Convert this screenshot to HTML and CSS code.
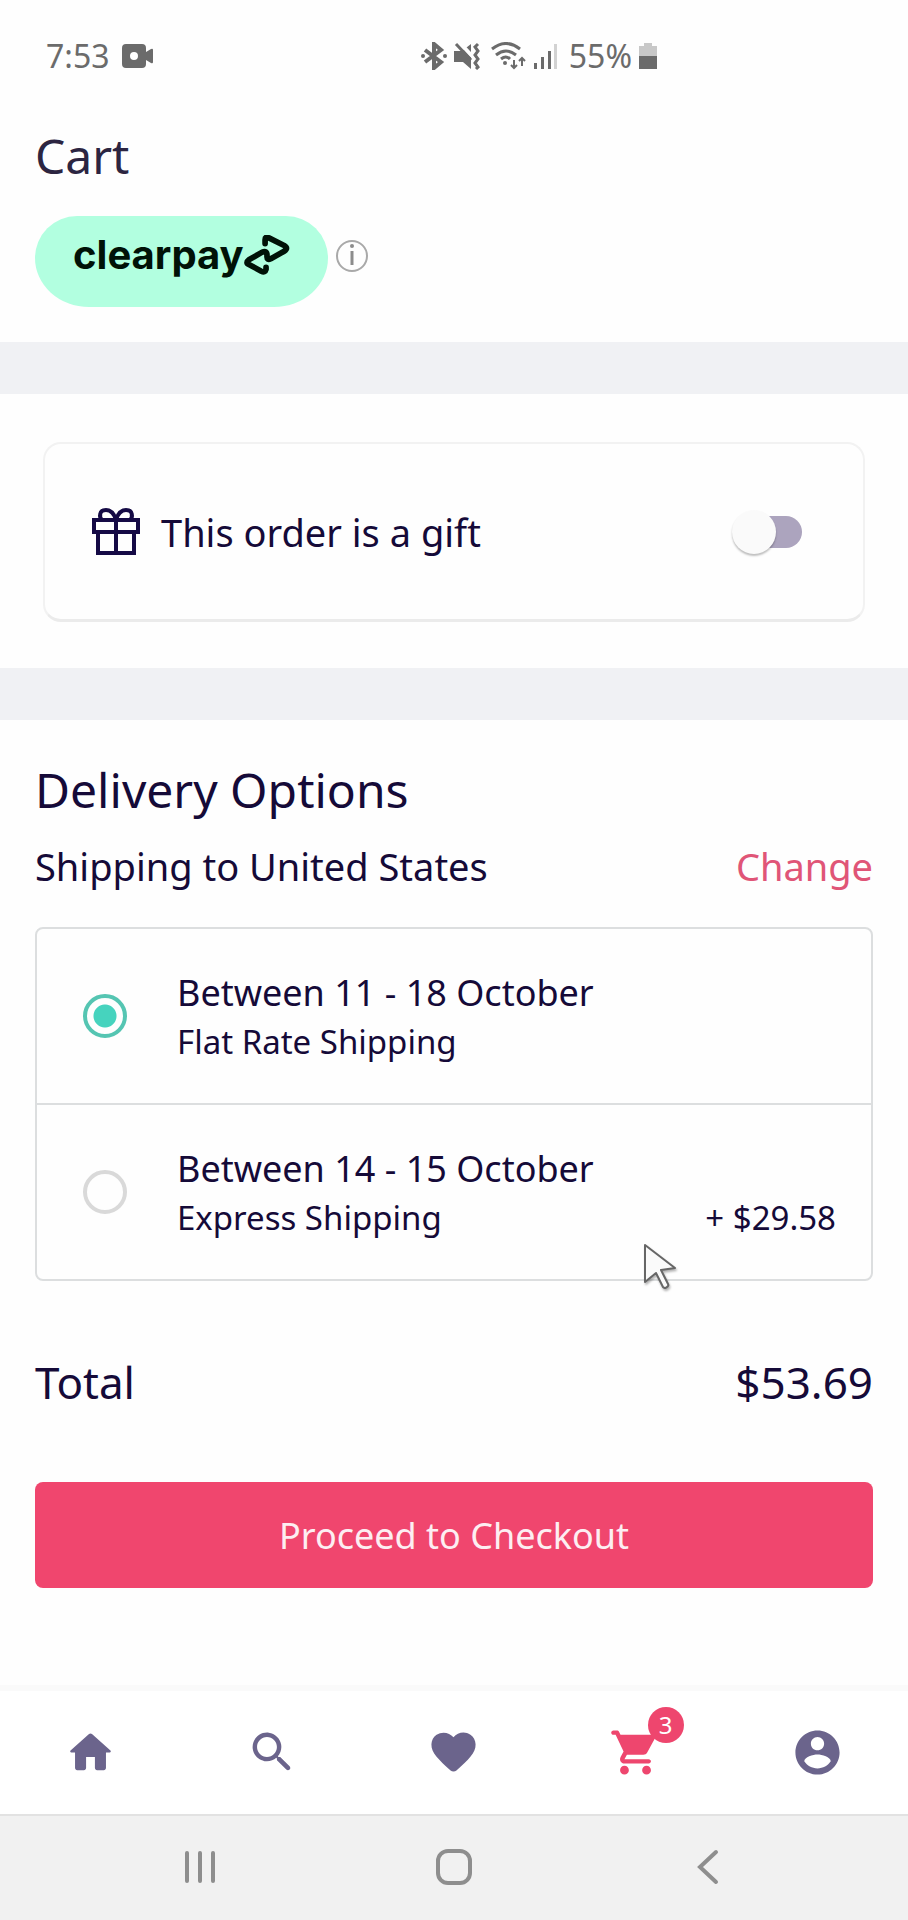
FILE: index.html
```html
<!DOCTYPE html>
<html lang="en">
<head>
    <meta charset="UTF-8">
    <meta name="viewport" content="width=device-width, initial-scale=1.0">
    <title>Cart</title>
    <link rel="stylesheet" href="styles.css">
</head>
<body>
    <div class="status-bar">
        <span class="status-time">7:53</span>
        <svg class="camera-icon" width="32" height="24" viewBox="0 0 32 24">
            <path fill-rule="evenodd" d="M4 0h16q4 0 4 4v4l5-3q2-1 2 1v12q0 2-2 1l-5-3v4q0 4-4 4H4q-4 0-4-4V4q0-4 4-4zm8 8a4 4 0 1 0 0 8 4 4 0 1 0 0-8z"/>
        </svg>
        <div class="status-right">
            <svg width="26" height="28" viewBox="0 0 26 28">
                <path d="M4 8l16 12-7 6V2l7 6L4 20" fill="none" stroke="#6b6b6b" stroke-width="4"/>
                <circle cx="2" cy="14" r="2"/><circle cx="24" cy="14" r="2"/>
            </svg>
            <svg width="27" height="28" viewBox="0 0 27 28">
                <path d="M0 9h8l9-7v25l-8-7H0z"/>
                <path d="M5 0l13 14" stroke="#fefefe" stroke-width="4"/>
                <path d="M2 2l15 16M24 2l-3 3 3 4-3 4 3 4-3 4 3 4-2 2" fill="none" stroke="#6b6b6b" stroke-width="3"/>
            </svg>
            <svg class="wifi-icon" width="36" height="28" viewBox="0 0 36 28">
                <path d="M1 7q14-11 28 0M5 13q10-8 20 0M10 17q5-4 9 0" fill="none" stroke="#6b6b6b" stroke-width="3"/>
                <circle cx="14" cy="21" r="2"/>
                <path d="M23 18v7M20 23l3 3 3-3M31 24v-7M28 19l3-3 3 3" fill="none" stroke="#6b6b6b" stroke-width="2"/>
            </svg>
            <svg class="signal-icon" width="24" height="28" viewBox="0 0 24 28">
                <path d="M0 21h3v6H0zM7 15h3v12H7zM14 9h3v18h-3z"/>
                <path d="M20 2h3v25h-3z" fill="#d2d2d2"/>
            </svg>
            <span class="status-battery">55%</span>
            <svg width="18" height="28" viewBox="0 0 18 28">
                <path d="M5 1h8v3h5v10H0V4h5z" fill="#c8c8c8"/>
                <path d="M0 14h18v13H0z"/>
            </svg>
        </div>
    </div>

    <header class="header">
        <h1 class="page-title">Cart</h1>
        <div class="clearpay">
            <div class="clearpay-badge">
                <span>clearpay</span>
                <svg width="46" height="40" viewBox="0 0 48 42">
                    <path d="M22 9V5q0-4 4-2l16 8q5 3 0 6l-14 8q-4 2-4-2v-2q0-5-5-3L5 26q-4 3 0 5l13 7q4 2 5-2v-2" fill="none" stroke="#001207" stroke-width="6" stroke-linejoin="round" stroke-linecap="round"/>
                </svg>
            </div>
            <button class="info-btn" aria-label="About Clearpay">
                <svg width="34" height="34" viewBox="0 0 34 34">
                    <circle cx="17" cy="17" r="15" fill="none" stroke="#a9a9a9" stroke-width="2"/>
                    <path d="M17 12v14" stroke="#8c8c8c" stroke-width="3"/>
                    <circle cx="17" cy="7" r="2" fill="#8c8c8c"/>
                </svg>
            </button>
        </div>
    </header>

    <section class="gift-section">
        <div class="gift-card">
            <svg width="50" height="50" viewBox="0 0 50 50" fill="none" stroke="#150a45" stroke-width="4">
                <path d="M3 13h44v12H3zM7 25v21h36V25M25 13v33M25 13c-2-7-6-10-10-10-7 0-7 7-4 10M25 13c2-7 6-10 10-10 7 0 7 7 4 10"/>
            </svg>
            <label for="gift">This order is a gift</label>
            <input type="checkbox" id="gift" class="toggle">
        </div>
    </section>

    <main class="delivery">
        <h2 class="section-title">Delivery Options</h2>
        <div class="ship-row">
            <span>Shipping to United States</span>
            <a href="#" class="change-link">Change</a>
        </div>

        <div class="options">
            <label class="option">
                <input type="radio" name="shipping" checked>
                <span class="option-text">
                    <span class="option-date">Between 11 - 18 October</span>
                    <span class="option-name">Flat Rate Shipping</span>
                </span>
            </label>
            <label class="option">
                <input type="radio" name="shipping">
                <span class="option-text">
                    <span class="option-date">Between 14 - 15 October</span>
                    <span class="option-name">Express Shipping</span>
                </span>
                <span class="option-price">+ $29.58</span>
            </label>
            <svg class="cursor" width="36" height="50" viewBox="0 0 36 50">
                <path d="M2 2v37l11-9 7 14q2 2 4 0 2-1 1-3l-7-14 14-2z" fill="#fafafa" stroke="#666" stroke-width="2" stroke-linejoin="round"/>
            </svg>
        </div>

        <div class="total-row">
            <span>Total</span>
            <span>$53.69</span>
        </div>

        <button class="checkout-btn">Proceed to Checkout</button>
    </main>

    <nav class="tab-bar">
        <a href="#" aria-label="Home">
            <svg class="tab-icon" viewBox="0 0 24 24"><path d="M10 19v-5h4v5c0 .55.45 1 1 1h3c.55 0 1-.45 1-1v-7h1.700c.46 0 .68-.57.33-.87L12.670 3.600c-.38-.34-.96-.34-1.340 0l-8.360 7.530c-.34.3-.13.87.33.87H5v7c0 .55.45 1 1 1h3c.55 0 1-.45 1-1z"/></svg>
        </a>
        <a href="#" aria-label="Search">
            <svg class="tab-icon" viewBox="0 0 24 24"><path d="M15.500 14h-.79l-.28-.27c1.200-1.400 1.820-3.310 1.480-5.340-.47-2.780-2.790-5-5.590-5.340-4.230-.52-7.790 3.040-7.270 7.270.34 2.800 2.560 5.120 5.340 5.590 2.030.34 3.940-.28 5.340-1.480l.27.28v.79l4.250 4.250c.41.41 1.080.41 1.490 0 .41-.41.41-1.080 0-1.490L15.500 14zm-6 0C7.010 14 5 11.990 5 9.500S7.010 5 9.500 5 14 7.010 14 9.500 11.990 14 9.500 14z"/></svg>
        </a>
        <a href="#" aria-label="Wishlist">
            <svg class="tab-icon" viewBox="0 0 24 24"><path d="M13.350 20.130c-.76.69-1.930.69-2.690-.01l-.11-.1C5.300 15.270 1.870 12.160 2 8.280c.06-1.700.93-3.330 2.340-4.290 2.640-1.800 5.900-.96 7.660 1.100 1.760-2.060 5.020-2.910 7.660-1.100 1.410.96 2.280 2.590 2.340 4.290.14 3.880-3.300 6.990-8.550 11.760l-.1.09z"/></svg>
        </a>
        <a href="#" class="active" aria-label="Cart">
            <svg class="tab-icon" viewBox="0 0 24 24"><path d="M7 18c-1.100 0-1.990.9-1.990 2S5.900 22 7 22s2-.9 2-2-.9-2-2-2zM1 3c0 .55.45 1 1 1h1l3.600 7.590-1.350 2.440C4.520 15.370 5.480 17 7 17h11c.55 0 1-.45 1-1s-.45-1-1-1H7l1.100-2h7.450c.75 0 1.410-.41 1.750-1.030l3.580-6.490c.37-.66-.11-1.480-.87-1.480H5.210l-.67-1.430c-.16-.35-.52-.57-.9-.57H2c-.55 0-1 .45-1 1zm16 15c-1.100 0-1.990.9-1.990 2s.89 2 1.990 2 2-.9 2-2-.9-2-2-2z"/></svg>
            <span class="cart-count">3</span>
        </a>
        <a href="#" aria-label="Account">
            <svg class="tab-icon" viewBox="0 0 24 24"><path d="M12 2C6.480 2 2 6.480 2 12s4.480 10 10 10 10-4.480 10-10S17.520 2 12 2zm0 3c1.660 0 3 1.340 3 3s-1.340 3-3 3-3-1.340-3-3 1.340-3 3-3zm0 14.200c-2.500 0-4.710-1.280-6-3.220.03-1.990 4-3.080 6-3.080 1.990 0 5.970 1.090 6 3.080-1.290 1.940-3.500 3.220-6 3.220z"/></svg>
        </a>
    </nav>

    <div class="system-bar">
        <button aria-label="Recent apps">
            <svg width="36" height="36" viewBox="0 0 36 36"><path d="M5 4v28M18 4v28M31 4v28"/></svg>
        </button>
        <button aria-label="Home screen">
            <svg width="36" height="36" viewBox="0 0 36 36"><rect x="2" y="2" width="32" height="32" rx="10"/></svg>
        </button>
        <button aria-label="Back">
            <svg width="36" height="36" viewBox="0 0 36 36"><path d="M26 3L10 18l16 15"/></svg>
        </button>
    </div>
</body>
</html>
```
FILE: styles.css
```css
* {
    margin: 0;
    padding: 0;
    box-sizing: border-box;
}

body {
    min-height: 100vh;
    display: flex;
    flex-direction: column;
    background-color: #fefefe;
    color: #150a38;
    font-family: 'Noto Sans', 'Open Sans', sans-serif;
    font-size: 38px;
    line-height: 52px;
}

a {
    text-decoration: none;
}

button {
    border: none;
    background: none;
    font-family: inherit;
    cursor: pointer;
}

svg {
    display: block;
    flex-shrink: 0;
}

/* Status bar */
.status-bar {
    height: 112px;
    padding-left: 46px;
    display: flex;
    align-items: center;
    gap: 12px;
    color: #6b6b6b;
    fill: #6b6b6b;
    font-size: 32px;
}

.status-right {
    display: flex;
    align-items: center;
    gap: 7px;
    margin-left: auto;
    padding-right: 251px;
}

.wifi-icon {
    margin-left: 3px;
}

.signal-icon {
    margin-right: 4px;
}

/* Header */
.header {
    padding: 12px 35px 35px;
}

.page-title {
    color: #2c2541;
    font-size: 48px;
    font-weight: 400;
    line-height: 64px;
}

.clearpay {
    display: flex;
    align-items: center;
    gap: 7px;
    margin-top: 28px;
}

.clearpay-badge {
    display: flex;
    align-items: center;
    height: 91px;
    padding: 0 38px 13px;
    border-radius: 42px 42px 54px 54px / 42px 42px 49px 49px;
    background-color: #b2ffe0;
    color: #001207;
    font-family: 'Inter', sans-serif;
    font-size: 40px;
    font-weight: 700;
}

.info-btn {
    margin-bottom: 11px;
}

/* Gift */
.gift-section {
    padding: 48px 43px 46px;
    border-top: 52px solid #f0f1f4;
    border-bottom: 52px solid #f0f1f4;
}

.gift-card {
    display: flex;
    align-items: center;
    gap: 20px;
    height: 180px;
    padding: 0 61px 0 46px;
    border: 2px solid #f2f2f2;
    border-bottom: 3px solid #ebebeb;
    border-radius: 18px;
}

.toggle {
    appearance: none;
    position: relative;
    width: 60px;
    height: 32px;
    margin-left: auto;
    border-radius: 16px;
    background-color: #aca4be;
    cursor: pointer;
}

.toggle::before {
    content: '';
    position: absolute;
    top: -6px;
    left: -10px;
    width: 44px;
    height: 44px;
    border-radius: 50%;
    background-color: #fafafa;
    box-shadow: 0 2px 2px rgba(0, 0, 0, 0.25);
}

.toggle:checked::before {
    left: 28px;
}

/* Delivery */
.delivery {
    flex: 1;
    padding: 38px 35px;
}

.section-title {
    font-size: 48px;
    font-weight: 400;
    line-height: 64px;
}

.ship-row {
    display: flex;
    justify-content: space-between;
    margin-top: 18px;
}

.change-link {
    color: #e05577;
}

.options {
    position: relative;
    margin-top: 35px;
    border: 2px solid #dcdedf;
    border-radius: 8px;
}

.option {
    display: flex;
    align-items: center;
    gap: 50px;
    padding: 38px 35px 38px 46px;
    cursor: pointer;
}

.option + .option {
    border-top: 2px solid #dcdedf;
}

.option input {
    appearance: none;
    width: 44px;
    height: 44px;
    border: 4px solid #d9d9d9;
    border-radius: 50%;
}

.option input:checked {
    border-color: #55c5b2;
    background: radial-gradient(circle, #46d3be 11px, transparent 12px);
}

.option-text {
    display: flex;
    flex-direction: column;
}

.option-date {
    font-size: 36px;
}

.option-name,
.option-price {
    font-size: 33px;
    line-height: 46px;
}

.option-price {
    margin-left: auto;
    align-self: flex-end;
}

.cursor {
    position: absolute;
    right: 192px;
    bottom: -14px;
    filter: drop-shadow(1px 2px 1px rgba(0, 0, 0, 0.3));
}

.total-row {
    display: flex;
    justify-content: space-between;
    margin-top: 71px;
    font-size: 44px;
    line-height: 60px;
}

.checkout-btn {
    display: block;
    width: 100%;
    height: 106px;
    margin-top: 70px;
    border-radius: 8px;
    background-color: #f0466e;
    color: #fdeef2;
    font-size: 36px;
}

/* Bottom tabs */
.tab-bar {
    display: flex;
    height: 129px;
    border-top: 6px solid #fafafa;
    background-color: #fff;
}

.tab-bar a {
    position: relative;
    flex: 1;
    display: flex;
    align-items: center;
    justify-content: center;
    fill: #6b648c;
}

.tab-bar .active {
    fill: #ee466e;
}

.tab-icon {
    width: 53px;
    height: 53px;
}

.cart-count {
    position: absolute;
    top: 16px;
    left: calc(50% + 12px);
    width: 36px;
    height: 36px;
    border-radius: 50%;
    background-color: #ee466e;
    color: #fff;
    font-size: 24px;
    line-height: 36px;
    text-align: center;
}

/* Android navigation */
.system-bar {
    display: flex;
    height: 106px;
    padding: 0 8% 2px;
    border-top: 2px solid #e2e2e2;
    background-color: #f1f1f1;
}

.system-bar button {
    flex: 1;
    display: flex;
    align-items: center;
    justify-content: center;
}

.system-bar svg {
    fill: none;
    stroke: #8e8e8e;
    stroke-width: 4;
    stroke-linecap: round;
}
```
